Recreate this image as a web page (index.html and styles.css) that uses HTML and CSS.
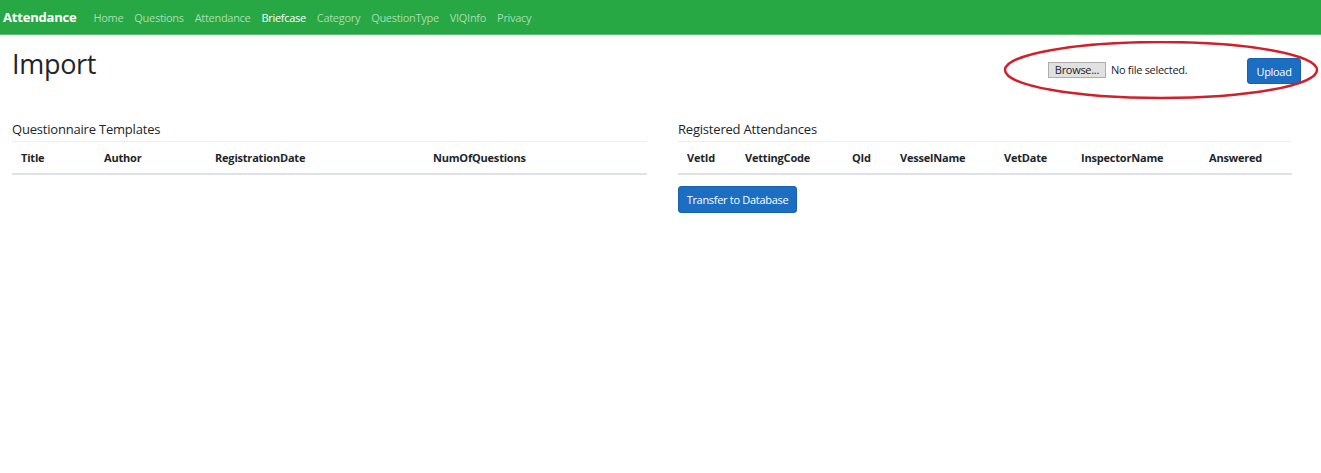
FILE: index.html
```html
<!DOCTYPE html>
<html>
<head>
<meta charset="utf-8">
<title>Import</title>
<link rel="stylesheet" href="styles.css">
</head>
<body>
<header class="navbar">
  <a class="brand">Attendance</a>
  <nav class="nav">
    <a>Home</a>
    <a>Questions</a>
    <a>Attendance</a>
    <a class="active">Briefcase</a>
    <a>Category</a>
    <a>QuestionType</a>
    <a>VIQInfo</a>
    <a>Privacy</a>
  </nav>
</header>
<main class="page">
  <div class="top">
    <h1 class="title">Import</h1>
    <div class="upload">
      <span class="browse">Browse...</span>
      <span class="nofile">No file selected.</span>
      <button class="btn upload-btn">Upload</button>
      <svg class="ring" width="318" height="62" viewBox="0 0 318 62"><ellipse cx="158" cy="29" rx="156" ry="28" fill="none" stroke="#d0212a" stroke-width="2.5"/></svg>
    </div>
  </div>
  <div class="cols">
    <section class="col">
      <h2 class="sub">Questionnaire Templates</h2>
      <table class="tbl">
        <colgroup><col class="c83"><col class="c111"><col class="c218"><col></colgroup>
        <thead><tr><th>Title</th><th>Author</th><th>RegistrationDate</th><th>NumOfQuestions</th></tr></thead>
      </table>
    </section>
    <section class="col">
      <h2 class="sub">Registered Attendances</h2>
      <table class="tbl">
        <colgroup><col class="c58"><col class="c107"><col class="c48"><col class="c104"><col class="c77"><col class="c128"><col></colgroup>
        <thead><tr><th>VetId</th><th>VettingCode</th><th>QId</th><th>VesselName</th><th>VetDate</th><th>InspectorName</th><th>Answered</th></tr></thead>
      </table>
      <button class="btn transfer">Transfer to Database</button>
    </section>
  </div>
</main>
</body>
</html>
```
FILE: styles.css
```css
* { box-sizing: border-box; }
body {
  margin: 0;
  font-family: "Open Sans", "Noto Sans", sans-serif;
  color: #212529;
  background: #fff;
}
.navbar {
  height: 35px;
  background: #28a745;
  display: flex;
  align-items: center;
  padding: 0 3px;
  border-bottom: 1px solid #5fbf73;
}
.brand {
  color: #fff;
  font-weight: 700;
  font-size: 13px;
  letter-spacing: -0.2px;
  margin-right: 17px;
}
.nav { display: flex; gap: 11px; }
.nav a {
  color: #a9dcb3;
  font-size: 11px;
  letter-spacing: -0.3px;
}
.nav a.active { color: #fff; }
.page { padding: 0 12px 0 12px; }
.top {
  display: flex;
  justify-content: space-between;
  align-items: flex-start;
  height: 85px;
}
.title {
  margin: 12px 0 0 0;
  font-weight: 400;
  font-size: 27px;
  letter-spacing: -0.3px;
  line-height: 34px;
}
.upload {
  position: relative;
  display: flex;
  align-items: center;
  margin-top: 23px;
  margin-right: 8px;
  height: 26px;
}
.browse {
  font-size: 11px;
  border: 1px solid #adadad;
  background: #e1e1e1;
  padding: 0 6px;
  height: 16px;
  line-height: 14px;
  letter-spacing: -0.3px;
  margin-top: -3px;
}
.nofile {
  font-size: 11px;
  margin-left: 5px;
  letter-spacing: -0.3px;
  width: 136px;
  margin-top: -3px;
}
.btn {
  background: #1b6ec2;
  border: 1px solid #1861ac;
  color: #fff;
  font-family: inherit;
  font-size: 11px;
  border-radius: 3px;
  letter-spacing: -0.3px;
}
.upload-btn { width: 54px; height: 26px; padding: 0; }
.ring { position: absolute; left: -45px; top: -17px; pointer-events: none; }
.cols {
  display: grid;
  grid-template-columns: 635px 614px;
  column-gap: 31px;
}
.sub {
  margin: 0;
  font-size: 13px;
  font-weight: 400;
  letter-spacing: -0.2px;
  line-height: 18px;
  padding-bottom: 3px;
  border-bottom: 1px solid #eceff1;
}
.tbl {
  width: 100%;
  border-collapse: collapse;
  table-layout: fixed;
}
.tbl th {
  text-align: left;
  font-size: 11px;
  font-weight: 700;
  letter-spacing: -0.2px;
  padding: 0 0 0 9px;
  height: 32px;
  border-bottom: 2px solid #dee2e6;
}
.c83 { width: 83px; } .c111 { width: 111px; } .c218 { width: 218px; }
.c58 { width: 58px; } .c107 { width: 107px; } .c48 { width: 48px; } .c104 { width: 104px; } .c77 { width: 77px; } .c128 { width: 128px; }
.transfer { margin-top: 11px; height: 27px; width: 119px; padding: 0; }
```
